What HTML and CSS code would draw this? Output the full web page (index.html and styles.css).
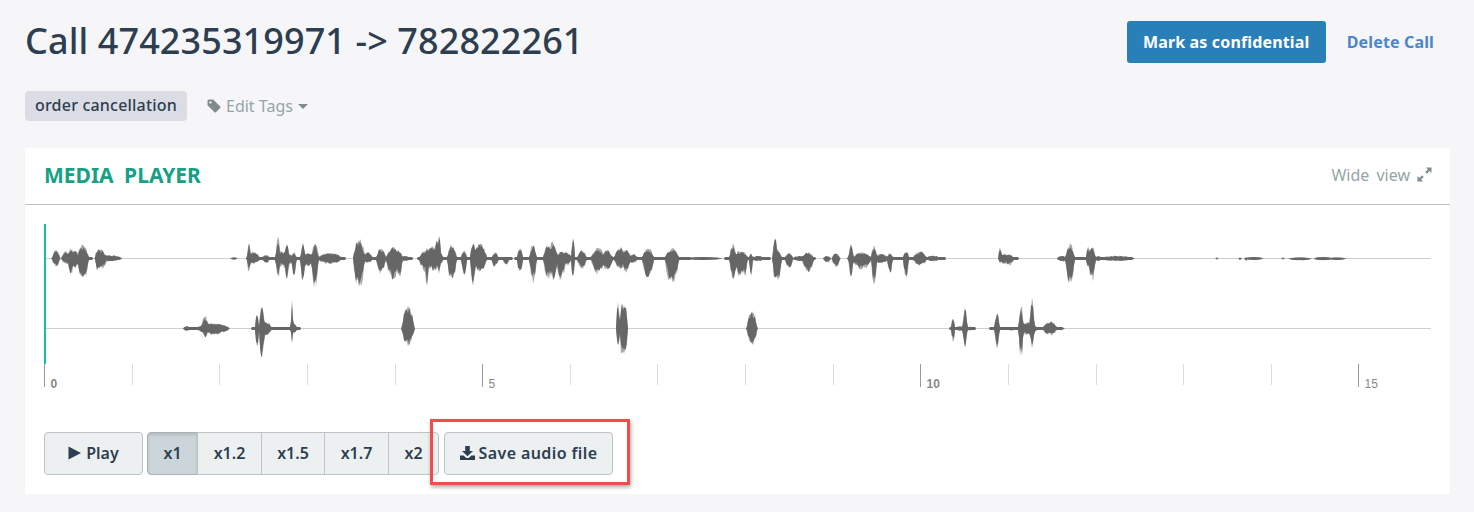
FILE: index.html
```html
<!DOCTYPE html>
<html lang="en">
<head>
    <meta charset="UTF-8">
    <title>Call 474235319971 -> 782822261</title>
    <link rel="stylesheet" href="styles.css">
</head>
<body>
    <div class="page">
        <div class="top-row">
            <h1>Call 474235319971 -&gt; 782822261</h1>
            <div class="top-actions">
                <button class="btn-primary">Mark as confidential</button>
                <a class="delete-link" href="#">Delete Call</a>
            </div>
        </div>

        <div class="tag-row">
            <span class="tag">order cancellation</span>
            <a class="edit-tags" href="#">
                <svg class="tag-icon" viewBox="0 0 14 14" width="14" height="14"><path fill-rule="evenodd" d="M0.5 2A1.5 1.5 0 0 1 2 0.5H6.2L13.2 7.5Q13.9 8.2 13.2 8.9L8.9 13.2Q8.2 13.9 7.5 13.2L0.5 6.2ZM3.4 2.2A1.2 1.2 0 1 0 3.41 2.2Z"/></svg>
                Edit Tags
                <span class="caret"></span>
            </a>
        </div>

        <div class="panel">
            <div class="panel-head">
                <span class="panel-title">MEDIA PLAYER</span>
                <a class="wide-view" href="#">
                    Wide view
                    <svg viewBox="0 0 15 15" width="15" height="15"><path d="M9 0.5H14.5V6L12.6 4.1L9.9 6.8L8.2 5.1L10.9 2.4ZM6 14.5H0.5V9L2.4 10.9L5.1 8.2L6.8 9.9L4.1 12.6Z"/></svg>
                </a>
            </div>

            <div class="wave-box">
                <svg id="wave" width="1388" height="168" viewBox="44 224 1388 168"></svg>
            </div>

            <div class="controls">
                <button class="btn btn-play">
                    <svg viewBox="0 0 13 14" width="13" height="14"><path d="M0.5 0.5L13 7L0.5 13.5Z"/></svg>
                    Play
                </button>
                <div class="speed-group">
                    <button class="btn speed active">x1</button>
                    <button class="btn speed">x1.2</button>
                    <button class="btn speed">x1.5</button>
                    <button class="btn speed">x1.7</button>
                    <button class="btn speed">x2</button>
                </div>
                <div class="save-wrap">
                    <button class="btn btn-save">
                        <svg viewBox="0 0 15 14" width="15" height="14"><path d="M5.2 0H9.8V5H13L7.5 10.2L2 5H5.2ZM0 9.5H3.6L6.3 12H8.7L11.4 9.5H15V14H0Z"/></svg>
                        Save audio file
                    </button>
                    <div class="highlight"></div>
                </div>
            </div>
        </div>
    </div>
    <script src="script.js"></script>
</body>
</html>
```

FILE: styles.css
```css
* { box-sizing: border-box; }
body { margin: 0; background: #f6f6f9; font-family: "Noto Sans", "Open Sans", sans-serif; color: #2c3e50; }
.page { padding: 0 24px 0 25px; height: 512px; overflow: hidden; }

.top-row { display: flex; justify-content: space-between; align-items: flex-start; height: 91px; padding-top: 21px; }
h1 { margin: -1px 0 0; font-size: 36px; font-weight: 500; line-height: 42px; letter-spacing: 0.1px; }
.top-actions { display: flex; align-items: center; gap: 21px; padding-right: 16px; }
.btn-primary { height: 42px; width: 199px; padding: 0; border: none; border-radius: 3px; background: #2980b9; color: #fff; font: 700 16px "Noto Sans", sans-serif; letter-spacing: 0.15px; }
.delete-link { color: #4a86c8; font-size: 16px; font-weight: 700; letter-spacing: 0.15px; text-decoration: none; }

.tag-row { display: flex; align-items: center; height: 30px; gap: 20px; }
.tag { display: block; width: 162px; height: 30px; line-height: 28px; text-align: center; background: #dcdce4; border-radius: 4px; font-size: 16px; font-weight: 500; letter-spacing: 0.2px; }
.edit-tags { display: flex; align-items: center; gap: 5px; color: #95a5a6; font-size: 16px; text-decoration: none; }
.tag-icon { fill: #7f8c8d; }
.caret { width: 0; height: 0; border-left: 5px solid transparent; border-right: 5px solid transparent; border-top: 5px solid #7f8c8d; }

.panel { margin-top: 27px; height: 346px; background: #fff; }
.panel-head { display: flex; justify-content: space-between; align-items: center; height: 57px; padding: 0 18px 3px 19px; border-bottom: 1px solid #bfc1c3; }
.panel-title { color: #16a085; font-size: 21px; font-weight: 700; word-spacing: 5px; }
.wide-view { display: flex; align-items: center; gap: 7px; color: #95a5a6; font-size: 16px; word-spacing: 3px; text-decoration: none; }
.wide-view svg { fill: #7f8c8d; }

.wave-box { padding: 19px 0 0 19px; height: 227px; }
.wave-box svg { display: block; }
.ruler-label { font-family: "Liberation Sans", sans-serif; font-size: 12px; fill: #888; }
.ruler-label.bold { font-weight: 700; }

.controls { display: flex; padding-left: 19px; gap: 4px; }
.btn { height: 43px; border: 1px solid #bdc3c7; background: #ecf0f1; color: #2c3e50; font: 600 16px "Noto Sans", sans-serif; padding: 0 0 2px; }
.btn svg { fill: #2c3e50; }
.btn-play { width: 99px; border-radius: 4px; display: flex; align-items: center; justify-content: center; gap: 5px; }
.speed-group { display: flex; }
.speed { margin-left: -1px; }
.speed:nth-child(1) { width: 51px; margin-left: 0; border-radius: 4px 0 0 4px; }
.speed:nth-child(2) { width: 65px; }
.speed:nth-child(3) { width: 64px; }
.speed:nth-child(4) { width: 65px; }
.speed:nth-child(5) { width: 51px; border-radius: 0 4px 4px 0; }
.speed.active { background: #ccd5d9; box-shadow: inset 0 2px 3px rgba(0, 0, 0, 0.12); border-color: #aab2b7; }
.save-wrap { position: relative; margin-left: 1px; }
.btn-save { width: 169px; border-radius: 4px; display: flex; align-items: center; justify-content: center; gap: 4px; letter-spacing: 0.4px; }
.highlight { position: absolute; left: -14px; top: -13px; width: 200px; height: 66px; border: 3px solid #f44b4b; box-shadow: 1px 2px 4px rgba(0, 0, 0, 0.35); }
```

FILE: script.js
```js
// bursts: [centre x, half width, height above line, height below line]
const topBursts = [
    [56,3.5,9,9],[66,4,8,6],[71,3,11,17],[75,3,10,12],[83,5,15,23],[98,2.5,11,16],[101,5,10,12],[108,12,4,3],
    [234,3,1,1],[249,1.5,17,16],[253,6,8,6],[266,3.5,4,5],
    [278,2,23,25],[284,8,8,10],[287,2,16,25],[294,2,7,20],[303,2,17,30],[308,8,6,8],[315,3,17,33],[330,11,6,6],
    [359,5,22,34],[368,4,7,5],[381,4,12,16],[393,6,12,23],[399,3,10,22],[405,4,3,3],
    [425,5,8,14],[427,2,14,31],[434,8,14,14],[437,2,24,12],[439,1.5,27,16],[452,4,15,27],[464,2.5,9,19],
    [473,2.5,21,30],[480,6,16,14],[495,3,7,10],[506,2.5,2,8],[520,2.5,12,18],[533,3,15,27],
    [548,4,15,23],[553,4,19,24],[561,4,8,24],[566,5,7,8],[573,1.5,26,23],[582,4,9,11],
    [598,6,11,17],[607,5,9,13],[620,5,13,11],[626,4,10,15],[633,4,5,5],[648,5,11,21],[672,6,11,28],
    [703,17,1.5,1.5],[733,3,15,22],[740,7,8,18],[745,1.5,6,20],[751,1.5,6,20],[758,6,3,3],
    [775,2,28,25],[778,3,10,24],[789,3.5,6,12],[800,6,3,3],[808,5,7,15],[827,3,3,5],[836,3.5,6,10],
    [851,2,17,21],[862,8,7,12],[874,2.5,14,27],[881,7,5,5],[890,2.5,6,17],[906,2.5,8,20],[920,6,8,8],[933,7,3,3],
    [1000,1.5,14,5],[1004,4,5,6],[1009,4,5,8],[1015,3,1,1],
    [1062,4,3,4],[1070,4,16,29],[1088,1.5,14,10],[1092,3,13,26],[1098,3,3,3],[1117,15,3,3],
    [1217,1,1,1],[1240,1,1,2],[1246,1,1,3],[1254,8,1.5,1.5],[1283,1,1,1],[1300,10,1,2],[1323,8,1.5,2],[1337,8,1,1.5]
];
const bottomBursts = [
    [187,3,3,3],[205,3,14,10],[213,14,6,7],[257,1.5,18,22],[262,2.5,24,33],[265,6,8,8],[276,5,1,1],[282,2,1.5,1.5],[292,1,30,18],[294,3,5,5],
    [408,5.5,24,19],[618,1.5,32,20],[622,2,32,30],[625,2.5,28,28],[752,4.5,20,20],
    [953,1.5,14,15],[960,3,3,3],[965,2,24,22],[970,4,2,2],
    [997,2,20,24],[1012,8,1.5,2],[1021,2,25,33],[1028,8,7,7],[1032,2,33,24],[1050,6,8,8],[1062,2,1,1]
];
// thin core that joins the bursts along the line: [from, to]
const topCore = [[62,92],[247,345],[355,412],[418,512],[515,690],[725,770],[775,792],[800,815],[848,945],[1000,1018],[1060,1132]];
const bottomCore = [[187,228],[252,300],[950,975],[990,1062]];

let seed = 7;
function rnd() {
    seed = (seed * 16807) % 2147483647;
    return seed / 2147483647;
}

function envelope(bursts, core, mid, scale, widen) {
    let up = '', down = '';
    for (let x = 46; x < 1431; x += 1) {
        let a = 0, b = 0;
        core.forEach(function(c) {
            if (x >= c[0] && x <= c[1]) { a = 1.5; b = 1.5; }
        });
        bursts.forEach(function(s) {
            const d = Math.abs(x - s[0]) / (s[1] * widen);
            if (d < 1) {
                const k = Math.pow(1 - d * d, 0.8);
                a = Math.max(a, s[2] * k);
                b = Math.max(b, s[3] * k);
            }
        });
        const ja = 0.6 + rnd() * 0.4, jb = 0.55 + rnd() * 0.45;
        up += 'L' + x + ' ' + (mid - Math.max(a * ja, Math.min(a, 1.5)) * scale).toFixed(1);
        down = 'L' + x + ' ' + (mid + Math.max(b * jb, Math.min(b, 1.5)) * scale).toFixed(1) + down;
    }
    return 'M46 ' + mid + up + down + 'Z';
}

let svg = '';
[258.5, 328.5].forEach(function(mid, i) {
    const bursts = i === 0 ? topBursts : bottomBursts;
    const core = i === 0 ? topCore : bottomCore;
    svg += '<line x1="45" x2="1431" y1="' + mid + '" y2="' + mid + '" stroke="#cfcfcf" stroke-width="1"/>';
    // paler outer layer, then the dark body
    svg += '<path fill="#a8a8a8" d="' + envelope(bursts, core, mid, 1, 1.2) + '"/>';
    svg += '<path fill="#666" d="' + envelope(bursts, core, mid, 0.92, 1.15) + '"/>';
});
for (let i = 0; i < 16; i++) {
    const x = Math.floor(44.5 + i * 87.63) + 0.5;
    const major = i % 5 === 0;
    svg += '<line x1="' + x + '" x2="' + x + '" y1="364" y2="' + (major ? 387 : 385) + '" stroke="' + (major ? '#999' : '#ddd') + '"/>';
    if (major) {
        const cls = i === 0 || i === 10 ? 'ruler-label bold' : 'ruler-label';
        svg += '<text class="' + cls + '" x="' + (x + 6) + '" y="388">' + i + '</text>';
    }
}
svg += '<rect x="44" y="224" width="2" height="140" fill="#1abc9c"/>';
document.getElementById('wave').innerHTML = svg;
```
